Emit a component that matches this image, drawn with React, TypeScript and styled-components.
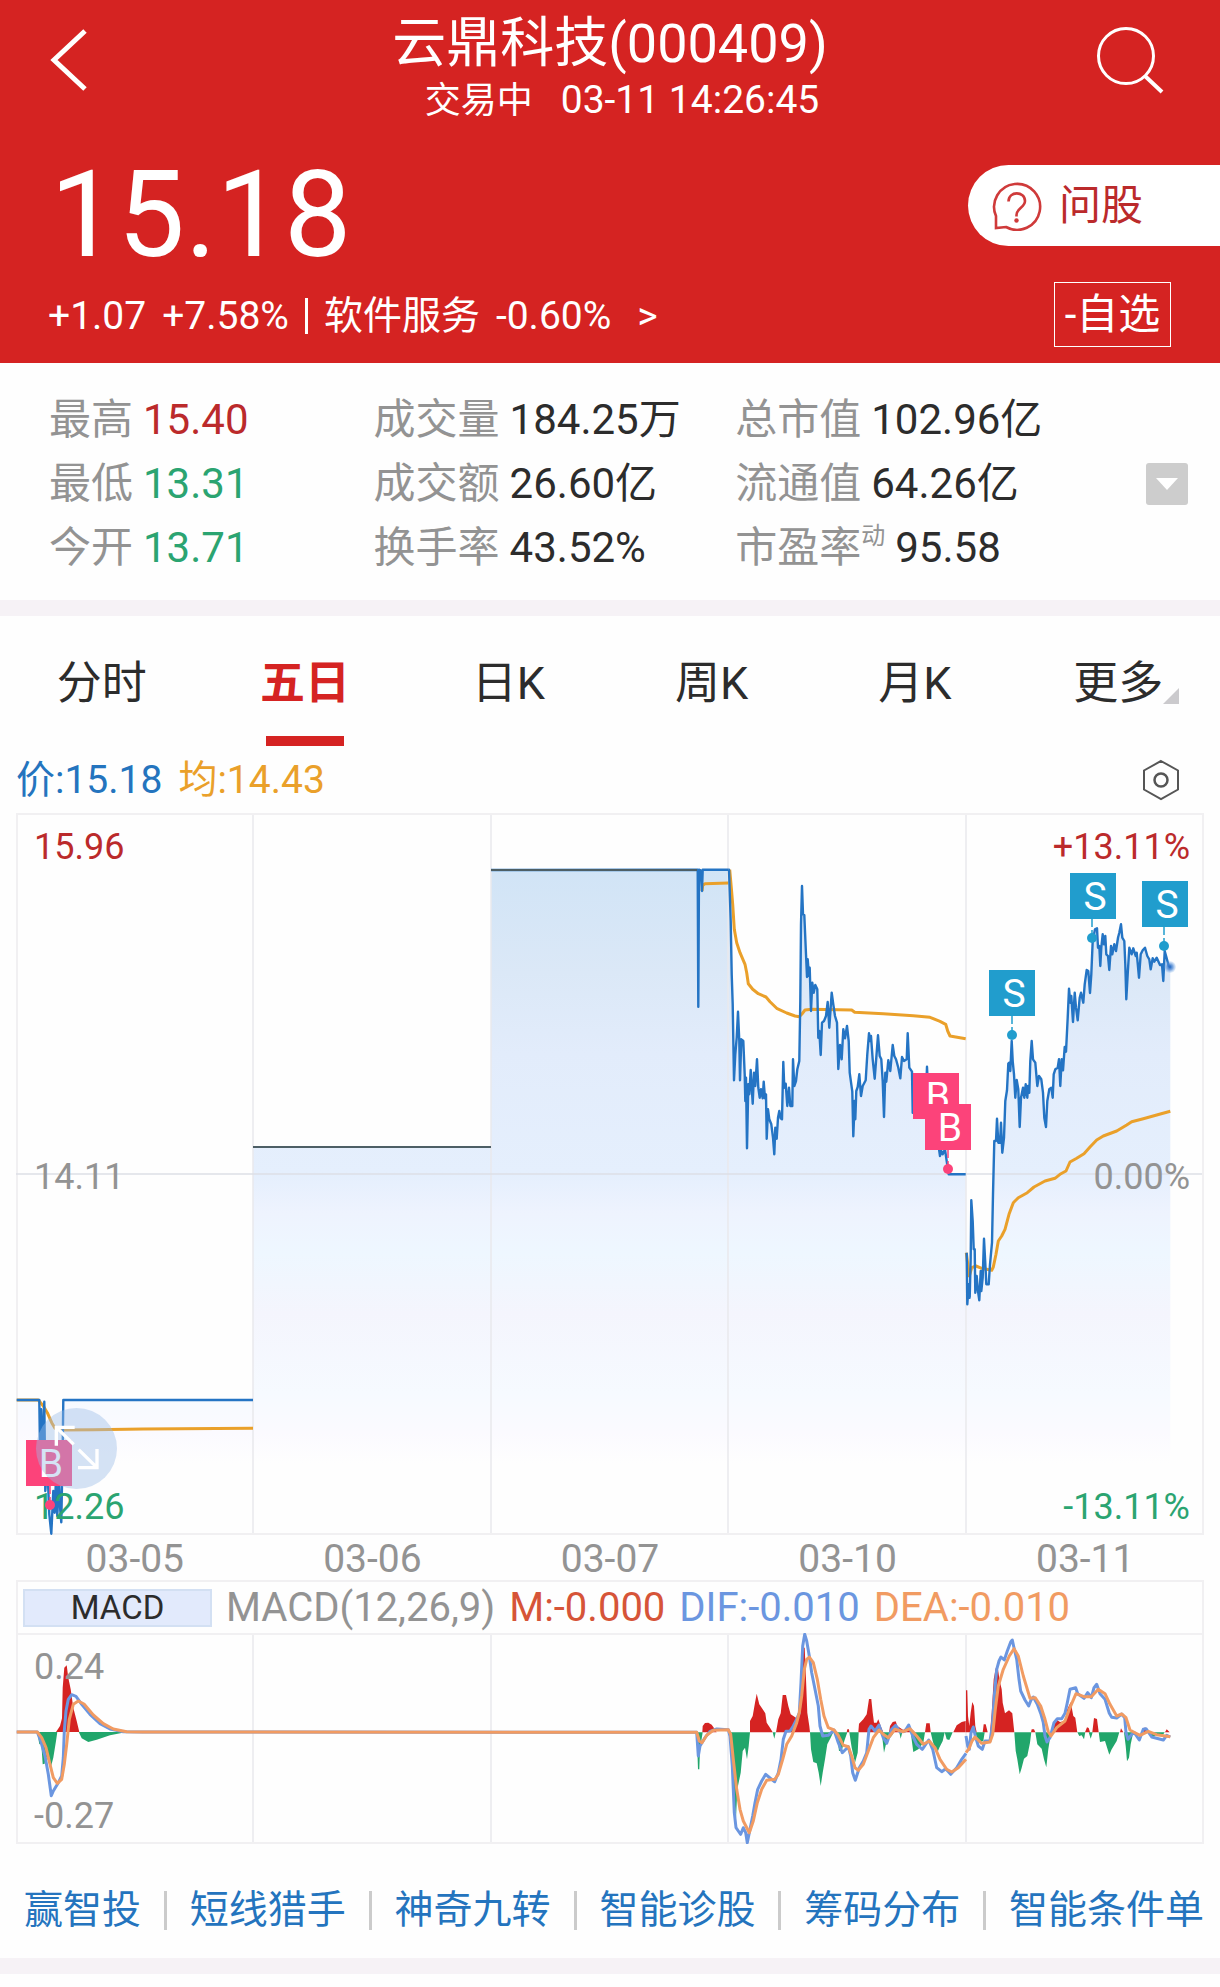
import React from 'react';
import styled, { createGlobalStyle } from 'styled-components';

const color = {
  red: '#d52322',
  up: '#bb2a2b',
  down: '#2ba471',
  ink: '#2c2c2c',
  muted: '#939393',
  blue: '#2474be',
  line: '#2474c4',
  amber: '#eaa02a',
  grid: '#f1f0f2',
  strip: '#f6f2f6',
  buy: '#fc437a',
  sell: '#219dcd',
  dif: '#6b96e0',
  dea: '#f19b62',
};

const GlobalStyle = createGlobalStyle`
  *, *::before, *::after { box-sizing: border-box; }
  body {
    margin: 0;
    background: #fefefe;
    color: ${color.ink};
    font-family: Roboto, 'Noto Sans CJK SC', sans-serif;
  }
  button {
    margin: 0;
    padding: 0;
    border: 0;
    background: none;
    color: inherit;
    font: inherit;
    cursor: pointer;
  }
  a { color: inherit; text-decoration: none; }
  svg { display: block; }
`;

/* ---------- header ---------- */

const Header = styled.header`
  background: ${color.red};
  color: #fff;
  padding: 12px 0 16px;
`;

const TitleBar = styled.div`
  display: grid;
  grid-template-columns: 1fr auto 1fr;
  align-items: start;
  padding: 0 56px 0 48px;
`;

const IconButton = styled.button<{ $end?: boolean }>`
  justify-self: ${(p) => (p.$end ? 'end' : 'start')};
  padding-top: 12px;
`;

const TitleBlock = styled.div`
  padding-left: 8px;
  text-align: center;
`;

const Title = styled.h1`
  margin: 0;
  font-size: 54px;
  line-height: 64px;
  font-weight: 400;
`;

const Status = styled.p`
  margin: 0;
  display: flex;
  justify-content: center;
  align-items: baseline;
  gap: 28px;
  padding-left: 24px;
  font-size: 36px;
  line-height: 48px;
`;

const Clock = styled.time`
  font-size: 39px;
`;

const Quote = styled.div`
  display: flex;
  justify-content: space-between;
`;

const QuoteMain = styled.div`
  padding: 18px 0 0 48px;
`;

const Price = styled.div`
  padding-left: 2px;
  font-size: 120px;
  line-height: 144px;
`;

const Change = styled.div`
  display: flex;
  align-items: center;
  gap: 16px;
  font-size: 39px;
  line-height: 58px;
`;

const Bar = styled.span`
  width: 3px;
  height: 36px;
  background: #fff;
`;

const SectorLink = styled.a`
  padding-left: 10px;
`;

const QuoteSide = styled.div`
  display: flex;
  flex-direction: column;
  align-items: flex-end;
  gap: 36px;
  padding-top: 40px;
`;

const AskButton = styled.button`
  display: flex;
  align-items: center;
  gap: 17px;
  width: 252px;
  height: 81px;
  padding-left: 24px;
  border-radius: 41px 0 0 41px;
  background: #fff;
  color: ${color.up};
  font-size: 42px;
  line-height: 60px;
`;

const FavButton = styled.button`
  width: 117px;
  height: 65px;
  margin-right: 49px;
  border: 1px solid #fff;
  font-size: 42px;
  line-height: 60px;
  white-space: nowrap;
`;

/* ---------- statistics ---------- */

const Stats = styled.section`
  display: flex;
  align-items: center;
  padding: 25px 32px 20px 49px;
`;

const StatGrid = styled.dl`
  flex: 1;
  display: grid;
  grid-template-columns: 324fr 361fr 410fr;
  margin: 0;
  font-size: 42px;
  line-height: 64px;
`;

const Stat = styled.div`
  display: flex;
  gap: 10px;
  white-space: nowrap;
`;

const StatLabel = styled.dt`
  display: flex;
  color: ${color.muted};
`;

const Mark = styled.small`
  font-size: 24px;
  line-height: 40px;
`;

const StatValue = styled.dd<{ $tone?: string }>`
  margin: 0;
  color: ${(p) => p.$tone ?? color.ink};
`;

const ExpandButton = styled.button`
  display: grid;
  place-items: center;
  width: 42px;
  height: 42px;
  border-radius: 3px;
  background: #cdcdcd;
`;

const Strip = styled.div`
  height: 16px;
  background: ${color.strip};
`;

/* ---------- tabs ---------- */

const Tabs = styled.nav`
  display: grid;
  grid-template-columns: repeat(6, 1fr);
`;

const Tab = styled.button<{ $active?: boolean }>`
  padding-top: 38px;
  font-size: 45px;
  line-height: 60px;
  font-weight: ${(p) => (p.$active ? 700 : 400)};
  color: ${(p) => (p.$active ? color.red : color.ink)};
  &::after {
    content: '';
    display: block;
    width: 78px;
    height: 10px;
    margin: 22px auto 0;
    background: ${(p) => (p.$active ? color.red : 'transparent')};
  }
`;

const TabText = styled.span`
  position: relative;
`;

const Corner = styled.i`
  position: absolute;
  left: 100%;
  bottom: 6px;
  border-left: 16px solid transparent;
  border-bottom: 16px solid #cbcacd;
`;

/* ---------- charts ---------- */

const Legend = styled.div`
  display: flex;
  align-items: center;
  gap: 16px;
  height: 67px;
  padding: 0 40px 0 16px;
  font-size: 39px;
  line-height: 48px;
`;

const Tone = styled.span<{ $tone: string }>`
  color: ${(p) => p.$tone};
`;

const LegendButton = styled.button`
  margin-left: auto;
`;

const Panel = styled.section`
  margin: 0 16px;
`;

const Plot = styled.div`
  position: relative;
`;

const Drawing = styled.svg`
  width: 100%;
  height: auto;
`;

const AxisLabels = styled.div`
  position: absolute;
  inset: 0;
  display: flex;
  flex-direction: column;
  justify-content: space-between;
  padding: 12px 14px 6px 18px;
  font-size: 36px;
  line-height: 44px;
  pointer-events: none;
`;

const AxisRow = styled.div<{ $tone: string }>`
  display: flex;
  justify-content: space-between;
  color: ${(p) => p.$tone};
`;

const Markers = styled.svg`
  position: absolute;
  inset: 0;
  width: 100%;
  height: 100%;
  pointer-events: none;
`;

const ZoomButton = styled.button`
  position: absolute;
  left: 20px;
  bottom: 46px;
  width: 81px;
  height: 81px;
  border-radius: 50%;
  background: rgba(155, 188, 232, 0.42);
`;

const Dates = styled.div`
  display: grid;
  grid-template-columns: repeat(5, 1fr);
  height: 45px;
  text-align: center;
  color: ${color.muted};
  font-size: 39px;
  line-height: 48px;
`;

const MacdBar = styled.div`
  display: flex;
  align-items: center;
  gap: 14px;
  height: 53px;
  padding: 0 5px;
  border: 2px solid ${color.grid};
  border-bottom: 0;
  font-size: 40px;
  line-height: 48px;
  white-space: nowrap;
`;

const MacdButton = styled.button`
  width: 189px;
  height: 38px;
  border: 2px solid #d3e0f3;
  background: #e2eafc;
  font-size: 33px;
  line-height: 34px;
`;

/* ---------- bottom links ---------- */

const Links = styled.nav`
  display: flex;
  justify-content: space-between;
  align-items: center;
  padding: 42px 16px 24px 24px;
  color: ${color.blue};
  font-size: 39px;
  line-height: 48px;
  white-space: nowrap;
`;

const Divider = styled.span`
  width: 3px;
  height: 39px;
  background: #cbcbcb;
`;

/* ---------- chart data ---------- */

type Pt = [number, number];

// Traces are stored three units to a pixel, relative to the origin of their block.
const place = (ox: number, oy: number, text: string): Pt[] =>
  text.split(' ').map((pair) => {
    const [x, y] = pair.split(',').map(Number);
    return [ox + x / 3, oy + y / 3];
  });

const toPath = (points: Pt[]) =>
  'M' + points.map(([x, y]) => `${x.toFixed(1)} ${y.toFixed(1)}`).join('L');

const toArea = (points: Pt[], floor: number) =>
  `${toPath(points)}L${points[points.length - 1][0].toFixed(1)} ${floor}L${points[0][0].toFixed(1)} ${floor}Z`;

const day1 = place(-6, 568, '20,57 88,57 90,200 94,85 98,230 103,62 106,330 112,250 118,400 124,458 130,330 134,395 138,290 142,405 147,300 151,390 154,424 158,200 160,57 729,57');
const day1Avg = place(-6, 568, '20,57 85,57 100,75 112,95 125,125 135,142 150,147 250,146 400,144 729,142');
const day2: Pt[] = [[237, 334], [475, 334]];
const day3: Pt[] = [
  [475, 57],
  ...place(664, 28, '53,86 55,497 57,86 62,88 66,150 68,86 145,86'),
];
const day4 = place(664, 28, '145,86 147,86 152,240 155,400 158,490 162,718 166,640 170,590 174,512 178,600 180,718 184,595 190,600 194,700 196,780 198,710 201,922 205,730 208,760 212,687 218,788 222,695 226,735 231,655 235,740 239,770 243,745 248,772 251,722 255,772 258,760 260,893 264,805 268,835 274,850 279,890 283,940 286,860 290,893 294,830 298,810 302,832 306,835 310,663 313,740 317,728 322,795 327,740 331,795 337,795 339,655 343,735 348,720 352,685 358,660 361,480 363,250 366,135 369,220 373,222 378,340 381,408 383,355 387,405 389,380 393,510 397,425 401,455 406,432 412,445 415,590 418,570 422,642 426,545 432,540 438,525 443,483 448,560 455,455 460,490 465,525 471,545 475,684 480,612 485,655 490,565 495,592 501,555 506,600 509,695 514,730 517,752 520,886 524,780 526,835 529,750 533,738 538,700 543,765 548,735 557,718 562,640 567,577 571,600 573,585 578,655 584,713 589,650 594,583 599,645 604,655 608,720 612,828 616,695 619,722 625,658 631,690 638,612 643,645 648,655 655,680 661,712 666,648 672,660 680,655 683,577 688,680 696,692 698,815 710,760 725,800 738,760 741,677 745,760 755,820 768,860 780,945 784,930 788,940 795,925 800,960 806,1000 857,1000');
const day3Avg = place(664, 28, '66,150 68,133 75,128 145,126');
const day4Avg = place(664, 28, '149,86 154,140 158,190 163,265 170,305 180,335 195,370 200,395 205,428 218,445 235,458 258,468 270,482 290,502 320,516 345,525 358,527 365,520 375,507 395,505 515,507 524,514 610,518 700,524 750,529 780,541 797,550 803,570 810,585 857,593');
const day5 = place(924, 28, '80,1235 82,1390 86,1330 89,1370 92,1250 94,1078 98,1140 101,1225 104,1225 106,1355 110,1305 114,1350 118,1378 122,1290 124,1350 128,1310 132,1193 137,1290 139,1330 146,1330 150,1270 156,1205 159,1060 163,900 168,900 171,833 175,905 180,905 183,845 187,935 192,890 196,780 201,748 205,668 208,665 211,690 215,600 218,660 222,700 226,770 230,717 235,745 239,858 243,770 249,740 253,770 257,730 262,770 264,735 268,755 271,660 275,600 279,655 286,665 292,735 297,705 304,715 309,755 313,830 318,858 322,780 328,745 334,740 338,770 341,700 346,685 353,680 357,655 361,735 365,655 369,688 374,618 378,632 383,530 387,443 391,485 394,465 399,543 404,455 408,500 413,538 419,470 423,455 430,485 434,430 440,387 445,390 450,456 454,400 458,300 465,265 471,262 474,320 478,315 481,375 484,320 488,280 492,310 496,285 499,340 504,345 508,387 513,315 517,340 523,310 528,330 534,290 538,275 543,250 547,290 553,300 556,370 559,475 563,400 568,320 575,340 580,322 587,345 590,335 597,410 602,340 608,328 615,320 622,345 628,355 632,385 638,352 643,362 650,350 660,372 666,370 670,420 674,330 680,352 686,375 691,377');
const day5Avg = place(924, 28, '79,1235 88,1305 95,1280 108,1275 125,1282 140,1285 155,1288 160,1278 168,1240 175,1200 185,1185 195,1165 207,1120 220,1085 235,1070 262,1055 282,1038 315,1020 345,1012 360,1000 378,990 390,963 410,952 432,938 450,918 470,897 490,885 530,870 560,852 575,842 610,833 650,822 691,811');

const bars = (ox: number, oy: number, shapes: string[]) =>
  shapes.map((s) => toPath(place(ox, oy, s)) + 'Z').join('');

const macdUp =
  bars(-6, -2, ['138,303 150,285 156,262 158,170 163,110 170,103 175,140 182,175 190,230 200,270 208,303']) +
  bars(674, -7, [
    '37,319 38,300 45,291 55,290 65,296 72,306 80,319',
    '180,319 180,285 188,270 195,230 200,203 208,235 218,250 226,262 230,290 240,305 248,319',
    '258,319 265,280 272,262 278,207 288,207 295,240 302,265 310,270 318,275 325,270 332,180 338,65 344,65 348,160 352,260 358,300 360,319',
    '470,319 472,310 477,310 478,319',
    '505,319 507,293 520,280 530,265 537,219 544,219 548,260 552,290 560,290 565,280 572,300 580,319',
    '597,319 600,300 608,288 617,286 622,300 640,312 655,300 668,312 675,319',
    '705,319 709,292 719,292 722,319',
    '790,319 800,298 815,288 827,285 827,319',
  ]) +
  bars(934, -7, [
    '48,319 48,193 52,193 54,270 58,300 62,260 67,228 72,240 76,300 80,319',
    '98,319 101,295 107,295 113,319',
    '120,319 125,260 131,160 137,127 144,130 149,165 155,190 158,230 165,262 177,253 187,262 193,319',
    '243,319 245,310 252,310 256,319',
    '305,319 318,280 330,288 345,285 352,250 362,228 370,270 376,275 382,319',
    '405,319 411,304 416,306 420,319',
    '427,319 432,276 441,279 446,319',
    '510,319 513,307 520,319',
    '572,319 585,304 595,319',
    '645,319 650,310 659,319',
  ]);

const macdDown =
  bars(-6, -2, [
    '82,303 88,340 94,338 98,400 104,398 107,375 115,390 122,410 130,380 138,330 142,303',
    '206,303 215,322 235,333 260,326 300,313 350,303',
  ]) +
  bars(674, -7, [
    '20,319 24,430 28,430 30,370 38,319',
    '118,319 125,420 132,500 138,578 142,490 152,440 158,375 165,365 171,400 176,360 180,319',
    '248,319 253,338 257,319',
    '360,319 363,370 370,408 380,412 386,440 392,480 398,440 405,400 412,355 422,335 430,319',
    '440,319 447,375 455,375 463,345 472,319',
    '478,319 485,365 495,410 503,380 506,319',
    '575,319 582,380 590,345 605,330 612,319',
    '628,319 632,338 637,319',
    '662,319 670,378 685,370 700,350 705,319',
    '722,319 728,345 740,385 748,365 758,345 764,319',
    '764,319 770,340 778,342 788,319',
  ]) +
  bars(934, -7, [
    '76,319 85,350 100,345 104,319',
    '193,319 197,375 202,400 209,445 215,425 222,398 232,390 240,350 244,319',
    '256,319 262,355 275,368 282,400 289,424 295,370 303,319',
    '382,319 388,330 395,328 402,340 406,319',
    '416,319 422,338 428,319',
    '446,319 450,348 465,345 478,386 485,370 500,345 508,319',
    '522,319 527,360 531,406 537,395 542,355 550,319',
    '597,319 605,335 620,326 640,325 644,319',
  ]);

const dif = [
  [
    ...place(-6, -2, '20,303 82,303 92,330 105,375 115,430 124,494 130,480 145,455 155,435 160,380 163,300 168,240 175,205 185,191 198,196 215,220 240,250 270,278 300,294 340,302 400,303'),
    ...place(674, -7, '0,319 20,319 25,390 30,360 45,335 60,316 80,309 115,311 120,330 127,420 133,560 138,605 145,615 152,625 160,605 167,620 172,650 180,610 188,570 195,530 203,490 215,465 227,445 240,456 254,467 265,440 273,400 280,340 288,316 300,315 310,300 320,280 328,260 333,170 338,60 344,25 350,45 358,90 365,140 375,190 385,240 390,300 398,330 415,328 432,312 445,350 457,380 475,362 482,390 488,440 496,463 508,425 520,405 530,380 537,310 543,300 555,315 567,297 580,335 590,352 605,310 617,298 630,318 645,315 656,297 668,330 680,355 697,370 716,342 728,370 740,425 755,437 767,428 782,445 800,425 815,400 828,382'),
  ],
  place(934, -7, '48,330 53,360 58,370 63,320 70,303 76,330 85,360 97,370 105,345 120,345 127,300 133,210 140,130 147,105 153,93 163,102 172,75 182,48 187,42 192,65 200,100 207,160 212,195 225,222 236,240 243,222 250,213 262,235 273,265 280,290 285,330 291,348 300,335 312,290 322,278 335,278 345,262 352,230 360,190 377,185 383,203 402,217 413,200 424,215 432,185 440,175 450,203 465,220 478,262 485,274 500,276 515,264 524,275 528,320 534,340 545,325 553,320 568,342 580,310 588,308 605,333 640,342 650,328 661,333'),
];

const dea = [
  [
    ...place(-6, -2, '20,303 82,303 95,320 108,350 120,400 130,440 142,457 155,445 163,400 170,340 178,265 190,220 205,210 222,219 250,252 280,278 310,294 350,302 400,303'),
    ...place(674, -7, '0,319 20,319 28,345 36,350 50,328 70,313 115,311 122,325 130,400 140,490 150,550 160,585 178,620 190,585 202,530 215,490 230,463 254,460 265,445 278,400 290,355 305,330 320,290 328,260 335,210 343,130 350,100 358,93 370,110 382,160 392,220 402,270 415,305 432,312 445,328 460,358 475,362 485,390 495,425 505,433 520,415 535,375 550,335 567,312 580,325 595,335 615,310 640,317 660,308 680,330 700,355 718,345 735,365 750,400 770,430 785,438 805,425 828,400'),
  ],
  place(934, -7, '48,380 57,368 66,345 75,333 95,352 120,348 128,325 136,250 145,180 160,130 178,90 192,68 205,90 220,150 240,217 256,215 272,240 285,280 295,318 303,330 320,305 345,285 360,245 378,203 402,212 424,212 445,190 465,203 480,235 500,270 515,264 528,275 540,312 555,320 570,328 595,316 620,326 661,332'),
];

const gradientStops: [number, string][] = [
  [57, '#d1e4f6'],
  [160, '#dbe8f7'],
  [240, '#e2ecfb'],
  [361, '#e5effd'],
  [400, '#eef3fe'],
  [440, '#eef7ff'],
  [500, '#f4f5fd'],
  [580, '#f6faff'],
  [620, '#fbfaff'],
  [650, '#fefefe'],
];

const trades = [
  { kind: 'B', x: 10, y: 627, dot: [34, 692] },
  { kind: 'B', x: 897, y: 260, dot: null },
  { kind: 'B', x: 909, y: 291, dot: [932, 356] },
  { kind: 'S', x: 973, y: 157, dot: [996, 222] },
  { kind: 'S', x: 1054, y: 60, dot: [1076, 125] },
  { kind: 'S', x: 1126, y: 68, dot: [1148, 133] },
];

/* ---------- drawings ---------- */

const Grid = ({ height }: { height: number }) => (
  <g stroke="#e9e9ec" fill="none">
    {[1, 2, 3, 4].map((i) => (
      <line key={i} x1={Math.round(i * 237.4)} x2={Math.round(i * 237.4)} y1="0" y2={height} strokeWidth="1.5" />
    ))}
    <rect x="1" y="1" width="1186" height={height - 2} stroke={color.grid} strokeWidth="2" />
  </g>
);

const PriceChart = () => (
  <Drawing viewBox="0 0 1188 722" role="img" aria-label="五日走势">
    <defs>
      <linearGradient id="fill" gradientUnits="userSpaceOnUse" x1="0" y1="0" x2="0" y2="722">
        {gradientStops.map(([y, c]) => (
          <stop key={y} offset={y / 722} stopColor={c} />
        ))}
      </linearGradient>
      <radialGradient id="glow">
        <stop offset="0.1" stopColor="#2f72c8" />
        <stop offset="0.5" stopColor="#4a86d4" stopOpacity="0.7" />
        <stop offset="1" stopColor="#7fb0ea" stopOpacity="0.15" />
      </radialGradient>
    </defs>
    {[day1, day2, day3, day4, day5].map((d, i) => (
      <path key={i} d={toArea(d, 722)} fill="url(#fill)" />
    ))}
    <Grid height={722} />
    <line x1="0" x2="1186" y1="361" y2="361" stroke="#dcdfe6" strokeWidth="1.5" />
    <g fill="none" strokeLinejoin="round">
      <g stroke={color.amber} strokeWidth="3">
        {[day1Avg, day3Avg, day4Avg, day5Avg].map((d, i) => (
          <path key={i} d={toPath(d)} />
        ))}
      </g>
      <g stroke={color.line} strokeWidth="2.4">
        {[day1, day3, day4, day5].map((d, i) => (
          <path key={i} d={toPath(d)} />
        ))}
      </g>
      <path d="M237 334H475M475 57H681" stroke="#4d5f66" strokeWidth="2" />
    </g>
    <circle cx="1154" cy="154" r="6" fill="url(#glow)" />
  </Drawing>
);

const TradeMarkers = () => (
  <Markers viewBox="0 0 1188 722">
    {trades.map((t, i) => {
      const tone = t.kind === 'B' ? color.buy : color.sell;
      return (
        <g key={i}>
          {t.dot && (
            <>
              <line x1={t.dot[0]} x2={t.dot[0]} y1={t.y + 46} y2={t.dot[1]} stroke={tone} strokeWidth="1.5" strokeDasharray="8 3" />
              <circle cx={t.dot[0]} cy={t.dot[1]} r="5" fill={tone} />
            </>
          )}
          <rect x={t.x} y={t.y} width="46" height="46" fill={tone} />
          <text x={t.x + 25} y={t.y + 37} fill="#fff" fontSize="39" textAnchor="middle">
            {t.kind}
          </text>
        </g>
      );
    })}
  </Markers>
);

const MacdChart = () => (
  <Drawing viewBox="0 0 1188 211" role="img" aria-label="MACD">
    <Grid height={211} />
    <path d={macdUp} fill="#d52322" />
    <path d={macdDown} fill="#21a66b" />
    <g fill="none" strokeWidth="3" strokeLinejoin="round">
      {dif.map((d, i) => (
        <path key={i} d={toPath(d)} stroke={color.dif} />
      ))}
      {dea.map((d, i) => (
        <path key={i} d={toPath(d)} stroke={color.dea} />
      ))}
    </g>
  </Drawing>
);

/* ---------- page ---------- */

const stats = [
  { label: '最高', value: '15.40', tone: color.up },
  { label: '成交量', value: '184.25万' },
  { label: '总市值', value: '102.96亿' },
  { label: '最低', value: '13.31', tone: color.down },
  { label: '成交额', value: '26.60亿' },
  { label: '流通值', value: '64.26亿' },
  { label: '今开', value: '13.71', tone: color.down },
  { label: '换手率', value: '43.52%' },
  { label: '市盈率', mark: '动', value: '95.58' },
];

const tabs = ['分时', '五日', '日K', '周K', '月K', '更多'];
const dates = ['03-05', '03-06', '03-07', '03-10', '03-11'];
const links = ['赢智投', '短线猎手', '神奇九转', '智能诊股', '筹码分布', '智能条件单'];

export default function App() {
  return (
    <>
      <GlobalStyle />
      <Header>
        <TitleBar>
          <IconButton aria-label="返回">
            <svg width="44" height="72" viewBox="0 0 44 72" fill="none" stroke="#fff" strokeWidth="5">
              <path d="M37 7L6 36L37 65" />
            </svg>
          </IconButton>
          <TitleBlock>
            <Title>云鼎科技(000409)</Title>
            <Status>
              <span>交易中</span>
              <Clock>03-11 14:26:45</Clock>
            </Status>
          </TitleBlock>
          <IconButton $end aria-label="搜索">
            <svg width="68" height="72" viewBox="0 0 68 72" fill="none" stroke="#fff" strokeWidth="3">
              <circle cx="30" cy="32" r="27.5" />
              <path d="M49 52L66 68" strokeWidth="4" />
            </svg>
          </IconButton>
        </TitleBar>
        <Quote>
          <QuoteMain>
            <Price>15.18</Price>
            <Change>
              <span>+1.07</span>
              <span>+7.58%</span>
              <Bar />
              <span>软件服务</span>
              <span>-0.60%</span>
              <SectorLink href="#sector" aria-label="软件服务板块">&gt;</SectorLink>
            </Change>
          </QuoteMain>
          <QuoteSide>
            <AskButton>
              <svg width="50" height="50" viewBox="0 0 50 50" fill="none" stroke="#cf3a3a" strokeWidth="2.6">
                <path d="M4 35A23 23 0 1 1 14 46L4 47Z" />
                <path d="M16.500 20.500C16.500 9.500 33 10 33 20C33 26.500 24.500 27 24.500 34V35.500" />
                <circle cx="24.500" cy="39.500" r="2.200" fill="#cf3a3a" stroke="none" />
              </svg>
              问股
            </AskButton>
            <FavButton>-自选</FavButton>
          </QuoteSide>
        </Quote>
      </Header>

      <Stats>
        <StatGrid>
          {stats.map((s) => (
            <Stat key={s.label}>
              <StatLabel>
                {s.label}
                {s.mark && <Mark>{s.mark}</Mark>}
              </StatLabel>
              <StatValue $tone={s.tone}>{s.value}</StatValue>
            </Stat>
          ))}
        </StatGrid>
        <ExpandButton aria-label="展开">
          <svg width="22" height="14" viewBox="0 0 22 14">
            <path d="M0 1H22L11 13Z" fill="#fff" />
          </svg>
        </ExpandButton>
      </Stats>
      <Strip />

      <Tabs>
        {tabs.map((t) => (
          <Tab key={t} $active={t === '五日'}>
            <TabText>
              {t}
              {t === '更多' && <Corner />}
            </TabText>
          </Tab>
        ))}
      </Tabs>

      <Legend>
        <Tone $tone={color.blue}>价:15.18</Tone>
        <Tone $tone={color.amber}>均:14.43</Tone>
        <LegendButton aria-label="设置">
          <svg width="38" height="42" viewBox="0 0 38 42" fill="none" stroke="#555" strokeWidth="2">
            <path d="M19 2L36 11.500V30.500L19 40L2 30.500V11.500Z" />
            <circle cx="19" cy="21" r="6.500" strokeWidth="2.500" />
          </svg>
        </LegendButton>
      </Legend>

      <Panel>
        <Plot>
          <PriceChart />
          <AxisLabels>
            <AxisRow $tone={color.up}>
              <span>15.96</span>
              <span>+13.11%</span>
            </AxisRow>
            <AxisRow $tone={color.muted}>
              <span>14.11</span>
              <span>0.00%</span>
            </AxisRow>
            <AxisRow $tone={color.down}>
              <span>12.26</span>
              <span>-13.11%</span>
            </AxisRow>
          </AxisLabels>
          <TradeMarkers />
          <ZoomButton aria-label="全屏">
            <svg width="81" height="81" viewBox="0 0 243 243" fill="none" stroke="#fff" strokeWidth="10">
              <path d="M116 58H61V113M61 58L113 109" />
              <path d="M126 179H183V123M183 179L128 125" />
            </svg>
          </ZoomButton>
        </Plot>
        <Dates>
          {dates.map((d) => (
            <span key={d}>{d}</span>
          ))}
        </Dates>
        <MacdBar>
          <MacdButton>MACD</MacdButton>
          <Tone $tone={color.muted}>MACD(12,26,9)</Tone>
          <Tone $tone="#d65438">M:-0.000</Tone>
          <Tone $tone={color.dif}>DIF:-0.010</Tone>
          <Tone $tone={color.dea}>DEA:-0.010</Tone>
        </MacdBar>
        <Plot>
          <MacdChart />
          <AxisLabels>
            <AxisRow $tone={color.muted}>0.24</AxisRow>
            <AxisRow $tone={color.muted}>-0.27</AxisRow>
          </AxisLabels>
        </Plot>
      </Panel>

      <Links>
        {links.map((l, i) => (
          <React.Fragment key={l}>
            {i > 0 && <Divider />}
            <a href={`#tool-${i + 1}`}>{l}</a>
          </React.Fragment>
        ))}
      </Links>
      <Strip />
    </>
  );
}
